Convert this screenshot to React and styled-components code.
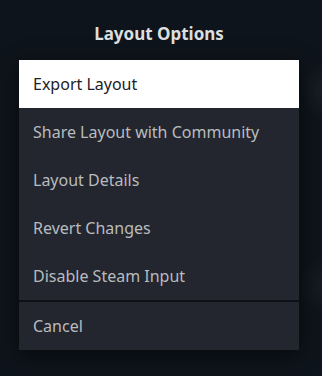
import React from "react";
import styled, { createGlobalStyle } from "styled-components";

const Global = createGlobalStyle`
  html, body { margin: 0; padding: 0; }
  body {
    width: 322px;
    height: 376px;
    overflow: hidden;
    background: #0e141b;
    font-family: "Noto Sans", "Open Sans", sans-serif;
  }
`;

const Page = styled.div`
  width: 322px;
  height: 376px;
  box-sizing: border-box;
  padding: 22px 23px 0 19px;
  display: flex;
  flex-direction: column;
  background: radial-gradient(circle at 330px 90px, rgba(40, 46, 56, 0.5), transparent 30px),
    radial-gradient(circle at 330px 285px, rgba(40, 46, 56, 0.4), transparent 30px), #0e141b;
`;

const Title = styled.h1`
  margin: 0;
  height: 38px;
  font-size: 17px;
  font-weight: 700;
  color: #dcdedf;
  text-align: center;
  line-height: 24px;
`;

const Menu = styled.div`
  display: flex;
  flex-direction: column;
  width: 280px;
  box-shadow: 0 6px 20px rgba(0, 0, 0, 0.5);
`;

const Item = styled.div`
  height: 48px;
  display: flex;
  align-items: center;
  padding-left: 14px;
  font-size: 16px;
  color: ${(p) => (p.$active ? "#1e2126" : "#b8bcbf")};
  background: ${(p) => (p.$active ? "#ffffff" : "#23262e")};
`;

const Separator = styled.div`
  height: 2px;
  background: #0e1117;
`;

export default function App() {
  const items = [
    "Export Layout",
    "Share Layout with Community",
    "Layout Details",
    "Revert Changes",
    "Disable Steam Input",
  ];
  return (
    <>
      <Global />
      <Page>
        <Title>Layout Options</Title>
        <Menu>
          {items.map((t, i) => (
            <Item key={t} $active={i === 0}>
              {t}
            </Item>
          ))}
          <Separator />
          <Item>Cancel</Item>
        </Menu>
      </Page>
    </>
  );
}
